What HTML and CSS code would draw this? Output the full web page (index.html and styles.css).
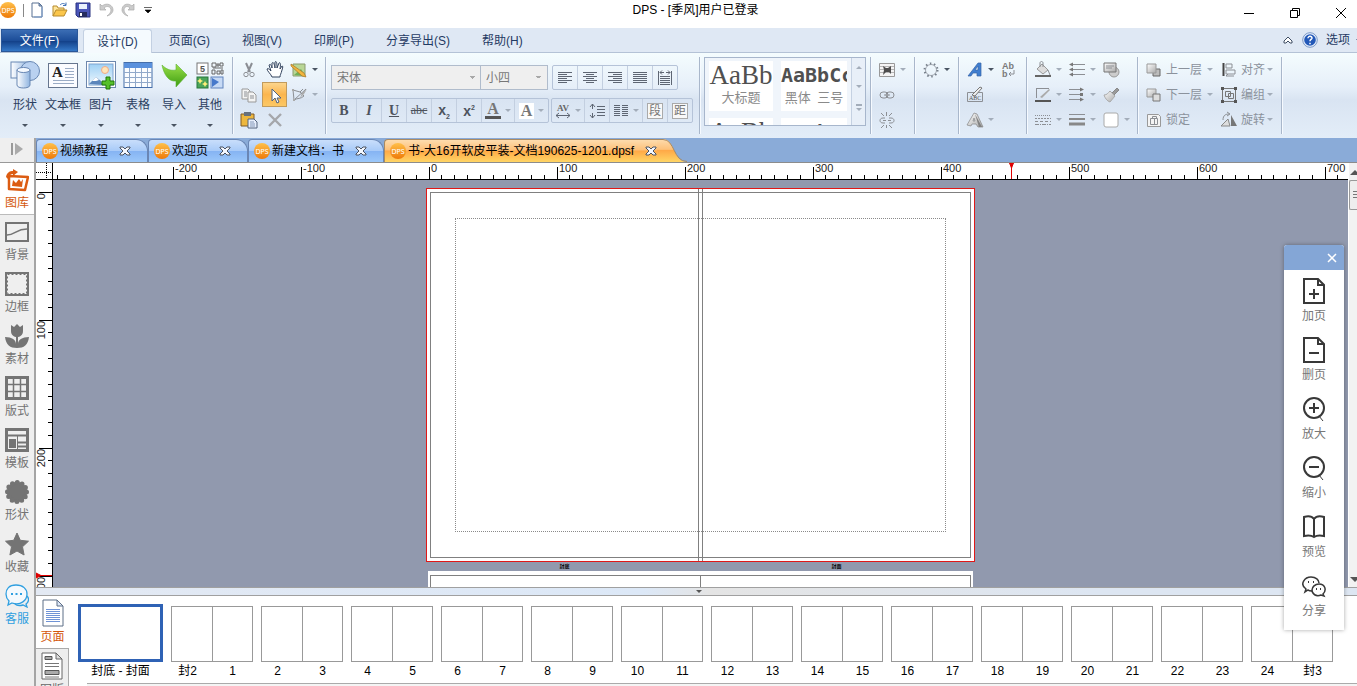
FILE: index.html
```html
<!DOCTYPE html>
<html lang="zh-CN">
<head>
<meta charset="utf-8">
<title>DPS - [季风]用户已登录</title>
<link rel="stylesheet" href="styles.css">
</head>
<body>
<svg class="defs" aria-hidden="true">
  <defs>
    <linearGradient id="orange" x1="0" y1="0" x2="0" y2="1"><stop offset="0" stop-color="#ffc04a"/><stop offset="1" stop-color="#ee7a08"/></linearGradient>
    <linearGradient id="steel" x1="0" y1="0" x2="1" y2="0"><stop offset="0" stop-color="#fff"/><stop offset="1" stop-color="#8fb4e0"/></linearGradient>
    <linearGradient id="sky" x1="0" y1="0" x2="0" y2="1"><stop offset="0" stop-color="#9fd0f4"/><stop offset="1" stop-color="#eef8fe"/></linearGradient>
    <linearGradient id="green" x1="0" y1="0" x2="0" y2="1"><stop offset="0" stop-color="#9be04a"/><stop offset="1" stop-color="#3c9c10"/></linearGradient>
    <linearGradient id="silver" x1="0" y1="0" x2="1" y2="1"><stop offset="0" stop-color="#fff"/><stop offset="1" stop-color="#a8a8a8"/></linearGradient>
    <linearGradient id="tabfill" x1="0" y1="0" x2="0" y2="1"><stop offset="0" stop-color="#fddcae"/><stop offset=".45" stop-color="#fdc17a"/><stop offset=".5" stop-color="#ffa947"/><stop offset="1" stop-color="#ffd565"/></linearGradient>
    <symbol id="dps" viewBox="0 0 16 16"><circle cx="8" cy="8" r="8" fill="url(#orange)"/><text x="8" y="10.500" text-anchor="middle" class="logo-text">DPS</text></symbol>
    <symbol id="close" viewBox="0 0 12 10"><path d="M1 1h3l2 2 2-2h3v1L8 5l3 3v1H8L6 7 4 9H1V8l3-3-3-3z" fill="#f4f8ff" stroke="#4a5260"/></symbol>
  </defs>
</svg>

<header class="titlebar">
  <div class="quick">
    <svg class="i16"><use href="#dps"/></svg>
    <span class="quick-sep"></span>
    <button aria-label="新建"><svg class="i16" viewBox="0 0 16 16"><path d="M3 1h7l3 3v11H3z" fill="#fff" stroke="#587093"/><path d="M10 1v3h3z" fill="#9db7da" stroke="#587093"/><path d="M13 5v10H5" fill="none" stroke="#7b9cc9"/></svg></button>
    <button aria-label="打开"><svg class="i16" viewBox="0 0 16 16"><path d="M1 14V4h4l1 2h6v3" fill="#ffe69a" stroke="#b78a2c"/><path d="M1 14l3-6h11l-3 6z" fill="#fbc64b" stroke="#b78a2c"/><path d="M8 3c2-2 4-2 6 0m0-2.500v3h-3" fill="none" stroke="#4474b8"/></svg></button>
    <button aria-label="保存"><svg class="i16" viewBox="0 0 16 16"><path d="M1 1h14v14H3l-2-2z" fill="#4a55b8" stroke="#283280"/><path d="M4 2h8v5H4z" fill="#e9f1fc"/><path d="M4 10h8v5H4z" fill="#252c60"/><path d="M5 11h2v3H5z" fill="#fff"/></svg></button>
    <button aria-label="撤销"><svg class="i16" viewBox="0 0 16 16"><path d="M2 2v6h6L6 6c3-3 7-1 7 2s-2 4-4 6c4-1 6-4 6-6 0-5-6-8-11-4z" fill="#ccc" stroke="#a9a9a9" stroke-width=".7"/></svg></button>
    <button aria-label="重做"><svg class="i16" viewBox="0 0 16 16"><path d="M13 2v6H7l2-2C6 3 3 5 3 8s2 4 4 6C3 13 1 10 1 8c0-5 5-8 10-4z" fill="#ccc" stroke="#a9a9a9" stroke-width=".7"/></svg></button>
    <button class="more" aria-label="自定义"><svg viewBox="0 0 8 8"><path d="M0 1.500h8M1 4h6L4 7z" stroke="#000" stroke-width=".6"/></svg></button>
  </div>
  <h1>DPS - [季风]用户已登录</h1>
  <div class="winbtns">
    <button aria-label="最小化"><svg viewBox="0 0 12 12"><path d="M1 6.500h10"/></svg></button>
    <button aria-label="还原"><svg viewBox="0 0 12 12"><path d="M1.500 3.500h7v7h-7zM3.500 3.500v-2h7v7h-2"/></svg></button>
    <button aria-label="关闭"><svg viewBox="0 0 12 12"><path d="M1 1l10 10M11 1L1 11"/></svg></button>
  </div>
</header>

<nav class="menu">
  <button class="file">文件(F)</button>
  <button class="current">设计(D)</button>
  <button>页面(G)</button><button>视图(V)</button><button>印刷(P)</button><button>分享导出(S)</button><button>帮助(H)</button>
  <div class="menu-right">
    <button aria-label="折叠"><svg class="i12" viewBox="0 0 12 12"><path d="M2 7l4-4 4 4v2H8L6 7 4 9H2z" fill="#fff" stroke="#3e4d63"/></svg></button>
    <button aria-label="帮助"><svg class="i16" viewBox="0 0 16 16"><circle cx="8" cy="8" r="7.300" fill="#e7effa" stroke="#7a98c8"/><circle cx="8" cy="8" r="5.800" fill="#2258b8"/><path d="M6 6.200c0-2.700 4.300-2.300 4 0-.2 1.300-2 1.300-2 3M8 10.700v1.500" stroke="#fff" stroke-width="1.500" fill="none"/></svg></button>
    <button class="opt">选项</button><i class="arr"></i>
  </div>
</nav>

<section class="ribbon">
  <div class="group big">
    <button><svg viewBox="0 0 30 30"><rect x="1" y="2" width="18" height="16" fill="url(#steel)" stroke="#6887b3"/><circle cx="20" cy="11" r="9.500" fill="#b9d1f0" stroke="#6887b3"/><path d="M7 10v15c0 4 13 4 13 0V10z" fill="url(#steel)" stroke="#6887b3"/><ellipse cx="13.500" cy="10" rx="6.500" ry="2.500" fill="#f4f9ff" stroke="#6887b3"/></svg><span>形状</span><i class="arr"></i></button>
    <button><svg viewBox="0 0 30 30"><rect x=".5" y="3.500" width="29" height="24" fill="#fbfcff" stroke="#66768f"/><text x="4" y="17" class="serif-a">A</text><path d="M17 8.500h9M17 11.500h9M17 14.500h9M17 17.500h9M5 20.500h21M5 23.500h21" stroke="#9bacc5"/></svg><span>文本框</span><i class="arr"></i></button>
    <button><svg viewBox="0 0 30 30"><rect x=".5" y="1.500" width="29" height="26" fill="#fff" stroke="#6d87ad"/><rect x="3" y="4" width="24" height="21" fill="url(#sky)" stroke="#7fa4d0"/><circle cx="19" cy="10" r="3.500" fill="#ffe5b8" stroke="#f0ab88"/><path d="M3 24l7-7 5 4 2 4z" fill="#5c86bc"/><path d="M6 21l4-4 3 3-3 1z" fill="#fff"/><path d="M20 17h4v4h4v4h-4v4h-4v-4h-4v-4h4z" fill="#56c02a" stroke="#217707"/></svg><span>图片</span><i class="arr"></i></button>
    <button><svg viewBox="0 0 30 30"><rect x="1" y="2.500" width="28" height="25" fill="#fbfdff" stroke="#456eaa"/><path d="M1 3h28v5H1z" fill="#5a91dd"/><path d="M1 12.500h28M1 17.500h28M1 22.500h28M6.500 8v19M12.500 8v19M18.500 8v19M24.500 8v19" stroke="#91a9ca"/></svg><span>表格</span><i class="arr"></i></button>
    <button><svg viewBox="0 0 30 30"><path d="M3 5c4 4 8 6 14 5V4l11 11-11 12v-6C10 22 5 15 3 5z" fill="url(#green)" stroke="#5cb232" stroke-width=".6"/></svg><span>导入</span><i class="arr"></i></button>
    <button><svg viewBox="0 0 30 30"><rect x="2" y="3" width="11" height="11" fill="#fff" stroke="#777"/><text x="7.500" y="12" text-anchor="middle" class="five">5</text><path d="M17 3h4v4h-4zM25 3h3v3h-3zM17 10h3v4h-3zM22 4h2v2h-2zM22 8h6M22 11h3v3h-3zM26 10h2v4h-2zM18 8h4" fill="none" stroke="#666"/><rect x="2" y="17" width="11" height="11" fill="#4ba45a" stroke="#26773b"/><path d="M5 18l1 2 2 1-2 1-1 2-1-2-2-1 2-1zM10 21l1 2 2 1-2 1-1 2-1-2-2-1 2-1z" fill="#ffef79"/><rect x="16" y="17" width="12" height="11" fill="#c7daf5" stroke="#6184bd"/><path d="M17 18l7 4-7 5z" fill="#4779cb"/></svg><span>其他</span><i class="arr"></i></button>
  </div>

  <div class="group tools edit">
    <button aria-label="剪切"><svg class="i18" viewBox="0 0 18 18"><path d="M6 2l4 9M12 2L8 11" stroke="#8b8e94" stroke-width="2"/><circle cx="6" cy="13.500" r="2.200" class="ln"/><circle cx="12" cy="13.500" r="2.200" class="ln"/></svg></button>
    <button aria-label="抓手"><svg class="i18" viewBox="0 0 18 18"><path d="M6 16c-1-3-5-6-5-8 1-1 2 0 4 2L3 4c1-1 2-1 3 3L6 2c1-1 2-1 3 5V1c1-1 2-1 2 6l2-5c1-1 2 0 1 6l2-3c1 0 1 1 0 4-1 4-2 5-2 7z" fill="#fff" stroke="#31425d"/></svg></button>
    <button aria-label="图形编辑"><svg class="i18" viewBox="0 0 18 18"><path d="M3 3h12v12H3z" fill="#b9d695" stroke="#8a9b6f"/><path d="M4 14l7-6 4 7z" fill="#6fb058"/><path d="M1 3l13 9 2 4-4-1L1 5z" fill="#f2b63c" stroke="#a87428" stroke-width=".7"/></svg><i class="arr dark"></i></button>
    <button aria-label="复制"><svg class="i18" viewBox="0 0 18 18"><path d="M2 3h6l2 2v8H2z" class="pg"/><path d="M8 6h5l3 3v7H8z" class="pg"/><path d="M4 6h3M4 8h3M4 10h3M10 10h4M10 12h4" class="ln"/></svg></button>
    <button class="on" aria-label="选择"><svg class="i18" viewBox="0 0 18 18"><path d="M6 3v12l3-3 2 5 2-1-2-4h4z" fill="#fff" stroke="#4b607f"/></svg></button>
    <button aria-label="路径"><svg class="i18" viewBox="0 0 18 18"><path d="M3 4l7 2 3-3M3 4l1 10c3-2 7-1 10-4l-4-4M4 14l12-11" class="ln"/><path d="M2 3h2v2H2zM3 13h2v2H3zM14 8l3-5-5 4-2 5z" fill="#aaa"/></svg><i class="arr"></i></button>
    <button aria-label="粘贴"><svg class="i18" viewBox="0 0 18 18"><path d="M1 3h13v12H1z" fill="#edb73e" stroke="#805b26"/><path d="M4 1h7v4H4z" fill="#66717e"/><path d="M8 8h6l3 3v6H8z" fill="#e7eefb" stroke="#53637d"/><path d="M10 11h4M10 13h5M10 15h5" stroke="#8498b8"/></svg></button>
    <button aria-label="删除"><svg class="i18" viewBox="0 0 18 18"><path d="M3 3l12 12M15 3L3 15" stroke="#a5a7ab" stroke-width="2.400"/></svg></button>
  </div>

  <div class="group font">
    <div class="frow">
      <select class="family" aria-label="字体"><option>宋体</option></select><select class="size" aria-label="字号"><option>小四</option></select>
      <div class="seg gap-l">
        <button aria-label="左对齐"><svg viewBox="0 0 16 16"><path d="M1 2.500h14M1 4.500h9M1 6.500h14M1 8.500h9M1 10.500h14M1 12.500h9"/></svg></button>
        <button aria-label="居中"><svg viewBox="0 0 16 16"><path d="M1 2.500h14M4 4.500h8M1 6.500h14M4 8.500h8M1 10.500h14M4 12.500h8"/></svg></button>
        <button aria-label="右对齐"><svg viewBox="0 0 16 16"><path d="M1 2.500h14M6 4.500h9M1 6.500h14M6 8.500h9M1 10.500h14M6 12.500h9"/></svg></button>
        <button aria-label="两端对齐"><svg viewBox="0 0 16 16"><path d="M1 2.500h14M1 4.500h14M1 6.500h14M1 8.500h14M1 10.500h14M1 12.500h14"/></svg></button>
        <button aria-label="分散对齐"><svg viewBox="0 0 16 16"><path d="M1.500 1v14M14.500 1v14M3 2.500h4M9 2.500h4M5 .5l-2 2 2 2M11 .5l2 2-2 2M3 6.500h10M3 8.500h10M3 10.500h10M3 12.500h10M3 14.500h10"/></svg></button>
      </div>
    </div>
    <div class="frow">
      <div class="seg">
        <button class="ch"><b>B</b></button><button class="ch"><b><i>I</i></b></button><button class="ch"><b><u>U</u></b></button><button class="ch abc"><s>abc</s></button><button class="ch x"><span>x<sub>2</sub></span></button><button class="ch x"><span>x<sup>2</sup></span></button>
        <button class="ch wide"><span class="color-a">A</span><i class="arr"></i></button><button class="ch wide"><span class="bg-a">A</span><i class="arr"></i></button>
      </div>
      <div class="seg gap-s">
        <button class="wide" aria-label="字间距"><svg viewBox="0 0 16 16"><text x="8" y="8" text-anchor="middle" class="av">AV</text><path d="M1 12.500h14M4 10l-3 2.500L4 15M12 10l3 2.500-3 2.500"/></svg><i class="arr"></i></button>
        <button aria-label="行距"><svg viewBox="0 0 16 16"><path d="M3.500 1v5M3.500 10v5M1 4l2.500-3L6 4M1 12l2.500 3L6 12M8 3.500h8M8 6.500h8M8 9.500h8M8 12.500h8"/></svg></button>
        <button class="wide" aria-label="分栏"><svg viewBox="0 0 16 16"><path d="M1 2.500h6M1 4.500h6M1 6.500h6M1 8.500h6M1 10.500h6M1 12.500h6M9 2.500h6M9 4.500h6M9 6.500h6M9 8.500h6M9 10.500h6M9 12.500h6"/></svg><i class="arr"></i></button>
        <button><span class="boxed">段</span></button><button><span class="boxed">距</span></button>
      </div>
    </div>
  </div>

  <div class="group gallery-wrap">
    <div class="gallery">
      <div class="styles">
        <button><span class="s1">AaBb</span><span class="cap">大标题</span></button>
        <button><span class="s2">AaBbCc</span><span class="cap">黑体&ensp;三号</span></button>
        <button><span class="s1">AaBb</span></button>
        <button><span class="s2">AaBbCc</span></button>
      </div>
      <div class="gscroll"><i class="arr up"></i><i class="arr"></i><span><i class="arr"></i></span></div>
    </div>
  </div>

  <div class="group tools two one-col">
    <button aria-label="环绕"><svg class="i18" viewBox="0 0 18 18"><path d="M1.500 2.500h15v13h-15z" class="pg"/><path d="M2 5.500h14M2 8.500h14M2 11.500h14" stroke="#b6b6b6"/><path d="M5 5l3 2h2l3-2v8l-2-2H8l-3 3 1-5z" fill="#4d4d4d"/></svg><i class="arr"></i></button>
    <button aria-label="链接"><svg class="i18" viewBox="0 0 18 18"><rect x="2" y="6" width="8" height="6" rx="3" class="ln"/><rect x="8" y="6" width="8" height="6" rx="3" class="ln"/><path d="M6 9h6" class="ln"/></svg></button>
    <button aria-label="断开链接"><svg class="i18" viewBox="0 0 18 18"><path d="M7 7H5c-4 0-4 5 0 5h2M11 7h2c4 0 4 5 0 5h-2M5 9.500h3M10 9.500h3M3 2l3 3M8.500 1v4M14 2l-3 3M3 17l3-3M8.500 17v-3M14 17l-3-3" class="ln"/></svg></button>
  </div>

  <div class="group tools two one-col">
    <button aria-label="效果"><svg class="i18" viewBox="0 0 18 18"><circle cx="9" cy="9" r="5.500" fill="none" stroke="#a4aab2"/><circle cx="9" cy="9" r="6.500" fill="none" stroke="#767f8a" stroke-width="2" stroke-dasharray="1.500 2.600"/></svg><i class="arr dark"></i></button>
  </div>

  <div class="group tools two art">
    <button aria-label="艺术字"><svg class="i18" viewBox="0 0 18 18"><path d="M2 15L12 2h3v13h-4v-3H7l-2 3zM9 9h3V5z" fill="#3f7ed0" stroke="#3764a8" stroke-width=".7" fill-rule="evenodd"/></svg><i class="arr dark"></i></button>
    <button aria-label="文字替换"><svg class="i18" viewBox="0 0 18 18"><text x="2" y="8" class="ab">Ab</text><text x="2" y="16" class="ab">b</text><path d="M14 9v4H9m2-2l-2 2 2 2" class="ln"/></svg></button>
    <button aria-label="文字路径"><svg class="i18" viewBox="0 0 18 18"><path d="M1.500 6.500h15v9h-15z" class="ln"/><text x="3" y="14" class="abc-t">ABC</text><path d="M6 9l8-8 2 1-7 8z" fill="#eee" stroke="#777"/></svg></button><span></span>
    <button aria-label="立体字"><svg class="i18" viewBox="0 0 18 18"><path d="M1 14L8 2l3 1 6 13h-5l-2-3H6l-1 2zM7 10h2L8 7z" fill="url(#silver)" stroke="#858585" stroke-width=".7"/><path d="M9 3l7 13h-3z" fill="#828282"/></svg><i class="arr"></i></button>
  </div>

  <div class="group tools two shape">
    <button aria-label="填充"><svg class="i18" viewBox="0 0 18 18"><path d="M3 8l5-5 6 6-5 4z" fill="#ddd" stroke="#999"/><path d="M6 6V2c0-2 3-2 3 0v4M14 9l2 5" class="ln"/><path d="M1 14h16v2H1z" fill="#666"/></svg><i class="arr"></i></button>
    <button aria-label="起始箭头"><svg class="i18" viewBox="0 0 18 18"><path d="M3 3.500h14M3 8.500h14M3 13.500h14" class="ln"/><path d="M1 3.500l4-2v4zM1 8.500l4-2v4zM1 13.500l4-2v4z" fill="#777"/></svg><i class="arr"></i></button>
    <button aria-label="阴影"><svg class="i18" viewBox="0 0 18 18"><circle cx="12" cy="11" r="5" fill="#ccc" stroke="#999"/><path d="M2 2h12v9H2z" fill="url(#silver)" stroke="#777"/><path d="M4 5h8M4 7h6" class="ln"/></svg></button>
    <button aria-label="线条颜色"><svg class="i18" viewBox="0 0 18 18"><path d="M2 2.500h13M2.500 2v10" class="ln"/><path d="M6 11l9-8 1 1-8 8z" fill="#aaa"/><path d="M1 14h16v2H1z" fill="#555"/></svg><i class="arr"></i></button>
    <button aria-label="末端箭头"><svg class="i18" viewBox="0 0 18 18"><path d="M1 3.500h14M1 8.500h14M1 13.500h14" class="ln"/><path d="M16 3.500l-4-2v4zM12 7h3v3h-3zM16 13.500l-4-2v4z" fill="#777"/></svg><i class="arr"></i></button>
    <button aria-label="格式刷"><svg class="i18" viewBox="0 0 18 18"><path d="M10 7l5-5 2 2-5 5z" fill="#999" stroke="#888"/><path d="M8 5l5 5-5 6c-3-1-5-4-6-7 3 0 4-2 6-4z" fill="url(#silver)" stroke="#aaa"/></svg></button>
    <button aria-label="虚线"><svg class="i18" viewBox="0 0 18 18"><path d="M1 4.500h16" class="ln" stroke-dasharray="1 1"/><path d="M1 7.500h16" class="ln" stroke-dasharray="2 1"/><path d="M1 10.500h16" class="ln" stroke-dasharray="3 2"/><path d="M1 13.500h16" class="ln" stroke-dasharray="4 1 1 1"/></svg><i class="arr"></i></button>
    <button aria-label="粗细"><svg class="i18" viewBox="0 0 18 18"><path d="M1 3.500h16" class="ln"/><path d="M1 8h16" stroke="#888" stroke-width="2"/><path d="M1 13h16" stroke="#888" stroke-width="3"/></svg><i class="arr"></i></button>
    <button aria-label="圆角"><svg class="i18" viewBox="0 0 18 18"><rect x="2" y="2" width="14" height="14" rx="2" fill="#fff" stroke="#aaa"/></svg><i class="arr"></i></button>
  </div>

  <div class="group tools arrange">
    <button><svg class="i18" viewBox="0 0 18 18"><path d="M8 8h7v7H8z" fill="#bcbcbc" stroke="#666"/><path d="M2 3h9v9H2z" fill="url(#silver)" stroke="#999"/></svg><span>上一层</span><i class="arr"></i></button>
    <button><svg class="i18" viewBox="0 0 18 18"><path d="M3.500 2v13" stroke="#444" stroke-width="2"/><path d="M6 3h6v4H6zM6 9h9v4H6z" class="ln"/><path d="M14 15H6l2-2" class="ln"/></svg><span>对齐</span><i class="arr"></i></button>
    <button><svg class="i18" viewBox="0 0 18 18"><path d="M2 3h9v8H2z" fill="url(#silver)" stroke="#999"/><path d="M8 8h7v7H8z" fill="#ddd" stroke="#777"/></svg><span>下一层</span><i class="arr"></i></button>
    <button><svg class="i18" viewBox="0 0 18 18"><path d="M2.500 2.500h13v13h-13zM5.500 5.500h5v5h-5zM8.500 7.500h5v5h-5z" fill="none" stroke="#777"/><path d="M1 1h3v3H1zM14 1h3v3h-3zM1 14h3v3H1zM14 14h3v3h-3z" fill="#555"/></svg><span>编组</span><i class="arr"></i></button>
    <button><svg class="i18" viewBox="0 0 18 18"><path d="M2.500 3.500h11l2 2v10h-13z" fill="#f4f4f4" stroke="#999"/><path d="M5.500 7.500h7v6h-7zM7.500 7V5.500h4V7M9.500 8v5" class="ln"/></svg><span>锁定</span></button>
    <button><svg class="i18" viewBox="0 0 18 18"><path d="M1 15h9L8 8z" fill="#ddd" stroke="#888"/><path d="M11 15V4l6 11z" fill="#777"/><path d="M3 9c0-5 3-6 6-6M7 1l3 2-3 2" class="ln"/></svg><span>旋转</span><i class="arr"></i></button>
  </div>
</section>

<div class="workspace">
  <aside class="side">
    <button class="expand" aria-label="展开"><svg class="i16" viewBox="0 0 16 16"><path d="M3 2v12" stroke="#999" stroke-width="2"/><path d="M6 2l8 6-8 6z" fill="#aaa"/></svg></button>
    <button class="item active"><svg viewBox="0 0 24 24"><path d="M4 8l19 1-3 13-16-1z" fill="none" stroke="#dc5c12" stroke-width="2.500" stroke-linejoin="round"/><path d="M7 18l1-6 3 3 3-4 2 3 2-3-1 8z" fill="#dc5c12"/><path d="M1 9c1-5 4-6 7-6V1l5 3-5 4V6C5 6 4 8 3 11z" fill="#dc5c12"/></svg><span>图库</span></button>
    <button class="item"><svg viewBox="0 0 24 24"><path d="M1 3h22v18H1z" fill="none" stroke="#747474" stroke-width="2"/><path d="M2 15c8 0 9-6 20-6" fill="none" stroke="#747474" stroke-width="1.500"/></svg><span>背景</span></button>
    <button class="item"><svg viewBox="0 0 24 24"><path d="M1 1h22v22H1z" fill="none" stroke="#747474" stroke-width="2"/><path d="M2.500 2.500h19v19h-19z" fill="none" stroke="#747474" stroke-dasharray="2 2"/></svg><span>边框</span></button>
    <button class="item"><svg viewBox="0 0 24 24"><path d="M6 1l3 2 3-3 3 3 3-2v6c0 8-12 8-12 0zM0 13c7 0 11 3 11 7v-7h2v7c0-4 4-7 11-7-1 8-5 11-12 11S1 21 0 13z" fill="#747474"/></svg><span>素材</span></button>
    <button class="item"><svg viewBox="0 0 24 24"><path d="M1.500 1.500h21v21h-21z" fill="none" stroke="#747474" stroke-width="3"/><path d="M8.500 2v20M15.500 2v20M2 8.500h20M2 15.500h20" stroke="#747474" stroke-width="1.500"/></svg><span>版式</span></button>
    <button class="item"><svg viewBox="0 0 24 24"><path d="M1.500 1.500h21v21h-21z" fill="none" stroke="#747474" stroke-width="3"/><path d="M3 7.500h18M12 14.500h9M12 18.500h9" stroke="#747474" stroke-width="2"/><path d="M4 11h7v9H4zM12 8h1v14h-1z" fill="#747474"/></svg><span>模板</span></button>
    <button class="item"><svg viewBox="0 0 24 24"><circle cx="12" cy="12" r="10" fill="#747474"/><circle cx="12" cy="12" r="9.500" fill="none" stroke="#747474" stroke-width="5" stroke-linecap="round" stroke-dasharray="0 4.974"/></svg><span>形状</span></button>
    <button class="item"><svg viewBox="0 0 24 24"><path d="M12 1l3.300 7.300 8.200.9-6 5.600 1.600 8.200-7.100-4-7.100 4 1.600-8.200-6-5.600 8.200-.9z" fill="#747474" stroke="#747474" stroke-linejoin="round"/></svg><span>收藏</span></button>
    <button class="item service"><svg viewBox="0 0 24 24"><path d="M4 17l-1 4 4-2c9 3 15-3 15-9C22 5 18 1 11 1S1 5 1 10c0 3 1 5 3 7z" fill="#f4f9fd" stroke="#2f9fe0" stroke-width="1.300"/><path d="M22 12c3 3 1 7-1 8l1 3-4-2c-4 1-7 0-8-1" fill="none" stroke="#2f9fe0" stroke-width="1.300"/><path d="M6 10h2M10.500 10h2M15 10h2" stroke="#2f9fe0" stroke-width="2"/></svg><span>客服</span></button>
  </aside>

  <main class="main">
    <div class="doctabs">
      <div class="dtab"><svg class="i16"><use href="#dps"/></svg><span>视频教程</span><button aria-label="关闭 视频教程"><svg><use href="#close"/></svg></button></div>
      <div class="dtab"><svg class="i16"><use href="#dps"/></svg><span>欢迎页</span><button aria-label="关闭 欢迎页"><svg><use href="#close"/></svg></button></div>
      <div class="dtab"><svg class="i16"><use href="#dps"/></svg><span>新建文档：书</span><button aria-label="关闭 新建文档"><svg><use href="#close"/></svg></button></div>
      <div class="dtab open"><svg class="i16"><use href="#dps"/></svg><span>书-大16开软皮平装-文档190625-1201.dpsf</span><button aria-label="关闭 书"><svg><use href="#close"/></svg></button></div>
      <svg class="tail" viewBox="0 0 30 23"><path d="M0 0h6c12 0 10 23 24 23H0z" fill="url(#tabfill)"/><path d="M0 .5h6c12 0 10 22 24 22" fill="none" stroke="#a98a62"/></svg>
    </div>

    <div class="editor">
      <div class="corner"></div>
      <svg class="hruler" id="hruler" aria-label="水平标尺"></svg>
      <svg class="vruler" id="vruler" aria-label="垂直标尺"></svg>
      <div class="canvas">
        <div class="spread first"><div class="trim"></div><div class="spine"></div><div class="safe"></div></div>
        <div class="names"><span>封底</span><span>封面</span></div>
        <div class="spread next"><div></div><div></div></div>
      </div>
      <div class="vscroll"><i class="arr up"></i><span class="thumb"></span><i class="arr"></i></div>
    </div>

    <div class="splitter"><i class="arr"></i></div>

    <div class="pages">
      <div class="ptabs">
        <button class="active"><svg viewBox="0 0 22 28"><path d="M1 1h14l6 6v20H1z" fill="#fff" stroke="#5d6e87"/><path d="M15 1v6h6z" fill="#dde7f6" stroke="#5d6e87"/><path d="M4 10.500h14M4 12.500h14M4 14.500h14M4 16.500h14M4 18.500h14M4 20.500h14M4 22.500h14" stroke="#6f93d6"/></svg><span>页面</span></button>
        <button><svg viewBox="0 0 22 28"><path d="M1 1h14l6 6v20H1z" fill="#fff" stroke="#666"/><path d="M15 1v6h6z" fill="#ddd" stroke="#666"/><path d="M4 4.500h7v3H4zM4 18.500h14v4H4z" fill="#aaa" stroke="#555"/><path d="M4 11.500h14M4 14.500h14M4 25h14" stroke="#777"/></svg><span>图版</span></button>
      </div>
      <div class="strip-wrap">
        <div class="strip">
          <button class="pg1"><span class="sheet"></span><span class="nums"><b>封底 - 封面</b></span></button>
          <button><span class="sheet"></span><span class="nums"><b>封2</b><b>1</b></span></button>
          <button><span class="sheet"></span><span class="nums"><b>2</b><b>3</b></span></button>
          <button><span class="sheet"></span><span class="nums"><b>4</b><b>5</b></span></button>
          <button><span class="sheet"></span><span class="nums"><b>6</b><b>7</b></span></button>
          <button><span class="sheet"></span><span class="nums"><b>8</b><b>9</b></span></button>
          <button><span class="sheet"></span><span class="nums"><b>10</b><b>11</b></span></button>
          <button><span class="sheet"></span><span class="nums"><b>12</b><b>13</b></span></button>
          <button><span class="sheet"></span><span class="nums"><b>14</b><b>15</b></span></button>
          <button><span class="sheet"></span><span class="nums"><b>16</b><b>17</b></span></button>
          <button><span class="sheet"></span><span class="nums"><b>18</b><b>19</b></span></button>
          <button><span class="sheet"></span><span class="nums"><b>20</b><b>21</b></span></button>
          <button><span class="sheet"></span><span class="nums"><b>22</b><b>23</b></span></button>
          <button><span class="sheet"></span><span class="nums"><b>24</b><b>封3</b></span></button>
        </div>
        <div class="hscroll"></div>
      </div>
    </div>
  </main>

  <div class="palette">
    <div class="phead"><button aria-label="关闭"><svg viewBox="0 0 10 10"><path d="M1 1l8 8M9 1L1 9" stroke="#fff" stroke-width="1.500"/></svg></button></div>
    <button><svg viewBox="0 0 24 26"><path d="M2 1h14l6 6v18H2zM16 1v6h6M12 11v10M7 16h10"/></svg><span>加页</span></button>
    <button><svg viewBox="0 0 24 26"><path d="M2 1h14l6 6v18H2zM16 1v6h6M7 16h10"/></svg><span>删页</span></button>
    <button><svg viewBox="0 0 24 26"><circle cx="12" cy="12" r="10"/><path d="M12 7v10M7 12h10"/><path d="M17 20l4 5" class="thin"/></svg><span>放大</span></button>
    <button><svg viewBox="0 0 24 26"><circle cx="12" cy="12" r="10"/><path d="M7 12h10"/><path d="M17 20l4 5" class="thin"/></svg><span>缩小</span></button>
    <button><svg viewBox="0 0 24 26"><path d="M12 5C9 1 5 2 2 3v19c4-1 7-1 10 1 3-2 6-2 10-1V3c-3-1-7-2-10 2zv18"/></svg><span>预览</span></button>
    <button><svg viewBox="0 0 24 26"><path d="M10 18c-2 0-3 0-4-1l-3 2 1-3c-7-5-1-12 5-12 5 0 8 3 8 6" class="mid"/><path d="M21 21l1 2-3-1c-5 2-9-1-9-5 0-3 3-6 7-6 6 0 8 6 4 10z" class="mid"/><path d="M6 9h1M11 9h1M14 16h1M18 16h1"/></svg><span>分享</span></button>
  </div>
</div>
<script src="rulers.js"></script>
</body>
</html>
```
FILE: styles.css
```css
* { box-sizing: border-box; }
body { margin: 0; height: 100vh; display: flex; flex-direction: column; overflow: hidden; background: #fff; font: 12px/16px "Liberation Sans", "Noto Sans CJK SC", sans-serif; color: #1e1e1e; }
button { font: inherit; color: inherit; background: none; border: 0; padding: 0; margin: 0; display: flex; align-items: center; justify-content: center; white-space: nowrap; }
svg { display: block; flex: none; }
.defs { position: absolute; width: 0; height: 0; }
.i12 { width: 12px; height: 12px; }
.i16 { width: 16px; height: 16px; }
.i18 { width: 18px; height: 18px; }
.logo-text { font: 7px "Noto Sans", sans-serif; fill: #fff; }
.arr { flex: none; width: 0; height: 0; border: 3px solid transparent; border-top-color: #a3adba; border-bottom: 0; }
.arr.dark, .big .arr { border-top-color: #4a5462; }
.arr.up { border: 3px solid transparent; border-bottom-color: #a3adba; border-top: 0; }
.ln { fill: none; stroke: #8c8f94; }
.pg { fill: #f4f4f4; stroke: #999; }

.titlebar { flex: none; height: 28px; display: grid; grid-template-columns: 1fr auto 1fr; background: #fff; }
.titlebar h1 { font-size: 12px; font-weight: 400; line-height: 20px; margin: 0; padding-left: 34px; color: #000; }
.quick { display: flex; align-items: center; gap: 7px; height: 20px; }
.quick-sep { width: 1px; height: 13px; background: #888; margin-right: -2px; }
.more svg { width: 8px; height: 8px; }
.winbtns { display: flex; justify-content: flex-end; padding-top: 2px; }
.winbtns button { width: 46px; height: 22px; }
.winbtns button:last-child { width: 39px; padding-left: 7px; }
.winbtns svg { width: 12px; height: 12px; fill: none; stroke: #000; }

.menu { flex: none; height: 25px; display: flex; padding: 1px 0 0 1px; background: #dfe8f4; border-bottom: 1px solid #b4c2d6; color: #1f3a63; }
.menu > button { padding: 0 16px; height: 23px; }
.menu > .file { width: 77px; background: linear-gradient(#3b6db4, #1c4d98 50%, #123f87 52%, #3478c8); border: 1px solid #2a5799; color: #fff; }
.menu > .current { height: 25px; margin: 0 1px 0 5px; padding: 0 13px; background: #f5fafe; border: 1px solid #c3d0e2; border-bottom: 0; border-radius: 3px 3px 0 0; }
.menu-right { margin-left: auto; display: flex; align-items: center; gap: 8px; height: 22px; overflow: hidden; }
.menu-right .arr { margin-right: -5px; margin-left: -2px; border-top-color: #1f3a63; }

.ribbon { flex: none; height: 85px; display: flex; padding: 4px 0; background: linear-gradient(#f4fcfe, #e6eff9 40%, #d9e4f2 55%, #e3edf8); overflow: hidden; }
.group { flex: none; border-right: 1px solid #a9b7cb; box-shadow: 1px 0 #f6faff; }
.big { display: flex; padding: 3px 4px 0 6px; }
.big button { width: 38px; flex-direction: column; justify-content: flex-start; color: #2c3f60; }
.big button:nth-child(n+4) { width: 36px; }
.big svg { width: 30px; height: 30px; }
.big span { margin: 7px 0 11px; }
.serif-a { font: bold 15px "Liberation Serif", serif; fill: #222; }
.five { font: bold 9px "Liberation Sans", sans-serif; fill: #555; }
.tools { display: grid; grid-auto-rows: 25px; align-content: start; }
.tools button { justify-content: flex-start; gap: 4px; }
.edit { grid-template-columns: 29px 28px 35px; }
.edit button:nth-child(3n+1) { padding-left: 7px; }
.edit button:nth-child(3n+2) { justify-content: center; width: 25px; }
.edit .on { background: linear-gradient(#fcd58c, #fbb54e 50%, #fcc865); border: 1px solid #c29b5c; }

.font { padding: 8px 5px; width: 374px; display: flex; flex-direction: column; gap: 8px; }
.frow { display: flex; }
.font select { appearance: none; height: 25px; padding: 0 5px; border: 1px solid #b0bccc; border-radius: 0; font: inherit; color: #777; background: conic-gradient(from 315deg at 50% 100%, #a8a8a8 90deg, transparent 0) right 5px center / 6px 3px no-repeat #efefef; }
.font .family { width: 150px; }
.font .size { width: 67px; border-left-width: 0; }
.seg { display: flex; height: 25px; border: 1px solid #b5c3d8; border-radius: 2px; }
.gap-l { margin-left: 4px; }
.gap-s { margin-left: 2px; }
.seg button { width: 25px; gap: 4px; border-right: 1px solid #c3cfe0; }
.seg button:last-child { border-right: 0; width: 24px; }
.seg .wide, .seg .wide:last-child { width: 33px; }
.seg svg { width: 16px; height: 16px; fill: none; stroke: #5e6673; }
.seg .ch { font-family: "Liberation Serif", serif; font-size: 14px; color: #4d535d; }
.seg .abc { font: 12px "Liberation Serif", serif; }
.seg .x { font: bold 14px "Liberation Sans", sans-serif; }
.seg sub, .seg sup { font-size: 7px; line-height: 7px; }
.color-a, .bg-a { font-size: 16px; font-weight: 700; line-height: 14px; padding: 0 2px; color: #777; }
.color-a { border-bottom: 3px solid #555; }
.bg-a { background: #fff; line-height: 16px; }
.av { font: bold 9px "Liberation Serif", serif; fill: #666; stroke: none; }
.boxed { border: 1px solid #aaa; background: #f8f8f8; line-height: 14px; width: 16px; height: 16px; color: #777; }

.gallery-wrap { width: 171px; padding-left: 4px; }
.gallery { display: flex; width: 162px; height: 69px; border: 1px solid #a7b6cc; overflow: hidden; background: #f0f5fb; }
.styles { flex: 1; display: grid; grid-template-columns: 64px 66px; grid-auto-rows: 50px; gap: 7px 8px; padding: 3px 4px; }
.styles button { background: #fff; flex-direction: column; justify-content: flex-start; overflow: hidden; align-items: center; color: #505050; }
.s1 { font: 27px/28px "Liberation Serif", serif; }
.s2 { font: bold 20px/28px "DejaVu Sans Mono", monospace; align-self: flex-start; }
.cap { font-size: 13px; line-height: 16px; margin-top: 1px; color: #8a8a8a; }
.gscroll { width: 14px; border-left: 1px solid #c5d1e2; display: flex; flex-direction: column; align-items: center; gap: 16px; padding-top: 8px; background: #e8eff8; }
.gscroll span { border-top: 2px solid #a3adba; padding-top: 4px; }

.two { padding-left: 7px; }
.one-col { width: 44px; grid-template-columns: 36px; }
.art { width: 68px; grid-template-columns: 34px 26px; }
.shape { width: 111px; grid-template-columns: 34px 34px 34px; }
.ab { font: bold 9px "Liberation Sans", sans-serif; fill: #7a7a7a; }
.abc-t { font: 6px "Liberation Serif", serif; fill: #555; }
.arrange { width: 144px; padding-left: 7px; grid-template-columns: 75px 60px; color: #8b929c; }
.arrange button { gap: 3px; }
.arrange .arr { margin-left: 2px; }
.arrange button:nth-child(2n) .arr { margin-left: -1px; }

.workspace { flex: 1; min-height: 0; display: flex; position: relative; }
.side { flex: none; width: 36px; background: #efefef; border-right: 2px solid #a5a5a5; display: flex; flex-direction: column; color: #737373; }
.expand { height: 25px; flex: none; border-bottom: 1px solid #999; }
.expand svg { margin-top: -3px; }
.side .item { height: 52px; flex: none; flex-direction: column; gap: 3px; padding-top: 1px; }
.side .item svg { width: 24px; height: 24px; }
.side .active { background: #fff; border-bottom: 1px solid #bbb; color: #d4570c; }
.side .service { color: #2f9fe0; }

.main { flex: 1; min-width: 0; display: flex; flex-direction: column; }
.doctabs { flex: none; height: 25px; display: flex; padding-top: 1px; background: #8aabd8; border-bottom: 1px solid #8c8c8c; color: #000; }
.dtab { display: flex; align-items: center; gap: 2px; padding: 0 16px 0 5px; border: 1px solid #6a86b4; border-bottom: 0; border-radius: 4px 12px 0 0; background: linear-gradient(#c9defb, #a9cbf8 48%, #86b4f3 52%, #9cc8fa); white-space: nowrap; }
.dtab button { margin-left: 9px; }
.dtab button svg { width: 12px; height: 10px; }
.dtab.open { border-color: #a98a62; border-right: 0; border-radius: 4px 0 0 0; background: linear-gradient(#fddcae, #fdc17a 45%, #ffa947 50%, #ffd565); padding-right: 0; }
.tail { width: 30px; height: 23px; }

.editor { flex: 1; min-height: 0; display: grid; grid-template: 17px 1fr / 17px 1fr 9px; }
.corner { background: repeating-linear-gradient(90deg, #000 0 1px, transparent 1px 2px) 0 9px / 100% 1px no-repeat, repeating-linear-gradient(#000 0 1px, transparent 1px 2px) 10px 0 / 1px 100% no-repeat, #fff; border-right: 1px solid #000; border-bottom: 1px solid #000; }
.hruler, .vruler { width: 100%; height: 100%; background: #fff; overflow: hidden; min-height: 0; }
.hruler { grid-column: 2; border-bottom: 1px solid #000; }
.vruler { grid-column: 1; grid-row: 2; border-right: 1px solid #000; }
.hruler text, .vruler text { font: 11px "Liberation Sans", sans-serif; fill: #222; }
.tick { stroke: #000; }
.mark { stroke: #e00000; fill: #e00000; }
.canvas { grid-column: 2; grid-row: 2; min-height: 0; overflow: hidden; background: #9199ae; padding-top: 8px; display: flex; flex-direction: column; align-items: center; }
.spread { flex: none; background: #fff; }
.first { width: 549px; height: 374px; border: 1px solid #e01818; display: grid; }
.first > div { grid-area: 1 / 1; }
.trim { margin: 3px; border: 1px solid #808080; }
.spine { justify-self: center; width: 5px; border: solid #808080; border-width: 0 1px; }
.safe { margin: 29px 28px; border: 1px dotted #8a8a8a; }
.names { flex: none; width: 544px; height: 9px; display: flex; justify-content: space-around; font-size: 5px; line-height: 8px; color: #000; font-weight: 700; }
.next { width: 545px; height: 374px; padding: 4px 2px; display: flex; }
.next div { flex: 1; border: 1px solid #808080; }
.next div + div { border-left: 0; }
.vscroll { grid-column: 3; grid-row: 1 / 3; background: #f2f2f2; border-left: 1px solid #fff; display: flex; flex-direction: column; align-items: flex-end; padding: 7px 0 5px; overflow: hidden; }
.vscroll .arr { border-top-color: #555; border-width: 5px; border-bottom-width: 0; margin-right: -3px; }
.vscroll .arr.up { border-width: 0 5px 5px; border-bottom-color: #555; }
.vscroll .arr:last-child { margin-top: auto; }
.thumb { width: 8px; height: 30px; margin-top: 5px; border: 1px solid #999; border-right: 0; border-radius: 2px 0 0 2px; background: repeating-linear-gradient(#777 0 1px, transparent 1px 3px) right 10px / 4px 9px no-repeat, #eee; }

.splitter { flex: none; height: 9px; border: solid #a0a0a0; border-width: 1px 0; background: linear-gradient(90deg, #e3e9f3, #dce8f7 46%, #e4e4e4 51%, #dde6f2 80%); display: flex; align-items: center; justify-content: center; padding-left: 4px; }
.splitter .arr { border-top-color: #555; }
.pages { flex: none; height: 90px; display: flex; overflow: hidden; background: #fff; }
.ptabs { flex: none; width: 33px; background: #eee; color: #666; }
.ptabs button { width: 100%; height: 53px; flex-direction: column; justify-content: flex-start; gap: 2px; padding-top: 3px; border-right: 1px solid #aaa; }
.ptabs .active { border-right: 0; border-bottom: 1px solid #aaa; background: #fff; color: #d4570c; }
.ptabs svg { width: 22px; height: 28px; }
.strip-wrap { flex: 1; min-width: 0; display: flex; flex-direction: column; }
.strip { flex: 1; display: flex; gap: 8px; padding: 8px 0 0 9px; overflow: hidden; }
.strip button { flex: none; width: 82px; flex-direction: column; justify-content: flex-start; color: #000; }
.strip .pg1 { width: 85px; }
.sheet { width: 82px; height: 56px; margin: 2px 0 1px; border: 1px solid #999; background: linear-gradient(#999, #999) center / 1px 100% no-repeat #fff; }
.pg1 .sheet { width: 85px; height: 58px; margin: 0 0 1px; border: 3px solid #2f62b5; background: #fff; }
.nums { display: flex; width: 90px; }
.nums b { flex: 1; font-weight: 400; text-align: center; }
.strip button:not(.pg1) .nums { margin-right: 4px; }
.hscroll { flex: none; height: 3px; margin-left: 18px; border-top: 1px solid #aaa; background: #f4f4f4; }

.palette { position: absolute; top: 107px; right: 13px; width: 60px; height: 385px; background: #fff; border-radius: 3px 3px 0 0; box-shadow: 0 0 4px rgba(0, 0, 0, .35); color: #777; }
.phead { height: 25px; background: #84a6d6; border-radius: 3px 3px 0 0; display: flex; justify-content: flex-end; padding-right: 7px; }
.phead svg { width: 10px; height: 10px; }
.palette > button { width: 100%; height: 59px; flex-direction: column; gap: 4px; padding-top: 2px; }
.palette > button svg { width: 24px; height: 26px; fill: none; stroke: #383838; stroke-width: 2; }
.palette .thin { stroke-width: 1; }
.palette .mid { stroke-width: 1.5; }
```
FILE: rulers.js
```js
const NS = "http://www.w3.org/2000/svg";
const STEP = 12.8;

function add(parent, name, attrs, text) {
  const el = document.createElementNS(NS, name);
  for (const key in attrs) el.setAttribute(key, attrs[key]);
  if (text) el.textContent = text;
  parent.appendChild(el);
}

function draw() {
  const h = document.getElementById("hruler");
  const v = document.getElementById("vruler");
  h.replaceChildren();
  v.replaceChildren();
  const width = h.clientWidth || h.getBoundingClientRect().width;
  const height = v.clientHeight || v.getBoundingClientRect().height;
  const x0 = Math.round(width / 2) - 272;
  for (let k = -Math.floor(x0 / STEP); x0 + k * STEP < width; k++) {
    const x = Math.floor(x0 + k * STEP) + 0.5;
    const major = k % 10 === 0;
    add(h, "path", { class: "tick", d: `M${x} ${major ? 4 : 12}V16` });
    if (major) add(h, "text", { x: x + 1.5, y: 9 }, String(k * 10));
  }
  for (let k = 0; 12 + k * STEP < height; k++) {
    const y = Math.floor(12 + k * STEP) + 0.5;
    const major = k % 10 === 0;
    add(v, "path", { class: "tick", d: `M${major ? 3 : 12} ${y}H16` });
    if (major) add(v, "text", { transform: `translate(9 ${y + 0.5}) rotate(-90)`, "text-anchor": "end" }, String(k * 10));
  }
  const mx = x0 + 582.5;
  add(h, "path", { class: "mark", d: `M${mx} 16V2m-2-2h4l-2 5z` });
  add(v, "path", { class: "mark", d: "M16 395.5H4M0 393v5l5-2.500z" });
}

draw();
addEventListener("resize", draw);
```
